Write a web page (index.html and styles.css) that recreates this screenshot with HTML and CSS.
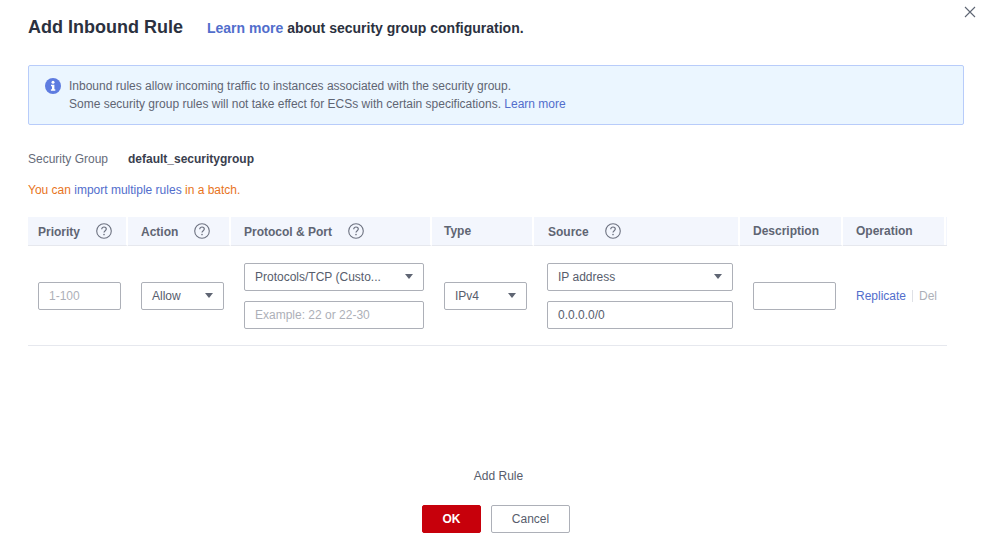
FILE: index.html
```html
<!DOCTYPE html>
<html lang="en">
<head>
<meta charset="utf-8">
<title>Add Inbound Rule</title>
<link rel="stylesheet" href="styles.css">
</head>
<body>
<div class="dialog">
  <button class="close" aria-label="Close">
    <svg width="12" height="12" viewBox="0 0 12 12"><path d="M1 1L11 11M11 1L1 11" stroke="#5e6573" stroke-width="1.1" fill="none"/></svg>
  </button>
  <header class="head">
    <h1 class="title">Add Inbound Rule</h1>
    <p class="subtitle"><a class="link">Learn more</a> about security group configuration.</p>
  </header>
  <div class="notice">
    <svg class="info" width="16" height="16" viewBox="0 0 16 16"><circle cx="8" cy="8" r="8" fill="#5e7ce0"/><circle cx="8" cy="4.3" r="1.5" fill="#fff"/><path d="M6 6.7H9.4V11.3H10.3V12.8H5.9V11.3H7V8.2H6Z" fill="#fff"/></svg>
    <p class="notice-text">Inbound rules allow incoming traffic to instances associated with the security group.<br>Some security group rules will not take effect for ECSs with certain specifications. <a class="link">Learn more</a></p>
  </div>
  <div class="group"><span class="group-label">Security Group</span><span class="group-name">default_securitygroup</span></div>
  <p class="batch">You can <a class="link">import multiple rules</a> in a batch.</p>
  <div class="table">
    <div class="th has-help">Priority<svg class="help" viewBox="0 0 16 16"><use href="#q"/></svg></div>
    <div class="th has-help">Action<svg class="help" viewBox="0 0 16 16"><use href="#q"/></svg></div>
    <div class="th has-help">Protocol &amp; Port<svg class="help" viewBox="0 0 16 16"><use href="#q"/></svg></div>
    <div class="th">Type</div>
    <div class="th has-help">Source<svg class="help" viewBox="0 0 16 16"><use href="#q"/></svg></div>
    <div class="th">Description</div>
    <div class="th last">Operation</div>

    <div class="td"><div class="field w83 placeholder">1-100</div></div>
    <div class="td"><div class="field w83 select">Allow<i class="caret"></i></div></div>
    <div class="td stack">
      <div class="field w180 select"><span>Protocols/TCP (Custo...</span><i class="caret"></i></div>
      <div class="field w180 placeholder">Example: 22 or 22-30</div>
    </div>
    <div class="td"><div class="field w83 select">IPv4<i class="caret"></i></div></div>
    <div class="td stack">
      <div class="field w186 select">IP address<i class="caret"></i></div>
      <div class="field w186">0.0.0.0/0</div>
    </div>
    <div class="td"><div class="field w83"></div></div>
    <div class="td"><div class="ops"><a class="link">Replicate</a><span class="sep"></span><span class="disabled">Delete</span></div></div>
  </div>
  <div class="add">Add Rule</div>
  <div class="actions">
    <button class="btn ok">OK</button>
    <button class="btn cancel">Cancel</button>
  </div>
</div>
<svg class="defs" width="0" height="0"><defs><g id="q"><circle cx="8" cy="8" r="7.3" fill="none" stroke="#6d7280" stroke-width="1.1"/><path d="M5.7 6.2C5.7 4.8 6.8 4 8 4C9.3 4 10.3 4.9 10.3 6.1C10.3 7.7 8 7.8 8 9.6" fill="none" stroke="#6d7280" stroke-width="1.2"/><circle cx="8" cy="11.6" r=".8" fill="#6d7280"/></g></defs></svg>
</body>
</html>
```

FILE: styles.css
```css
* { box-sizing: border-box; }
html, body { margin: 0; padding: 0; background: #fff; }
body { width: 987px; height: 547px; overflow: hidden; font-family: "Liberation Sans", Arial, sans-serif; font-size: 12px; color: #575d6c; }
p, h1 { margin: 0; }
.defs { position: absolute; }
.dialog { position: relative; width: 987px; height: 547px; padding: 16px 0 0 28px; }
.close { position: absolute; top: 6px; left: 964px; width: 12px; height: 12px; padding: 0; border: 0; background: none; display: flex; }
.head { display: flex; align-items: center; height: 22px; margin-bottom: 27px; }
.title { font-size: 18px; font-weight: 700; color: #2b3140; line-height: 22px; width: 179px; }
.subtitle { font-size: 14px; font-weight: 700; color: #2b3140; line-height: 22px; padding-top: 2px; }
.link { color: #526ecc; }
.notice { width: 936px; height: 60px; background: #ebf6ff; border: 1px solid #b8ccfa; border-radius: 2px; display: flex; padding: 12px 0 0 16px; margin-bottom: 26px; }
.info { flex: none; margin-right: 8px; }
.notice-text { line-height: 18px; margin-top: -1px; color: #5f6573; }
.group { display: flex; height: 16px; line-height: 16px; margin-bottom: 15px; }
.group-label { width: 100px; color: #666c7a; }
.group-name { font-weight: 700; color: #3a404e; }
.batch { line-height: 16px; color: #e8741c; margin-bottom: 19px; }
.table { display: grid; width: 919px; grid-template-columns: 100px 103px 201px 102px 206px 103px 104px; grid-template-rows: 29px 100px; }
.th { background: #f3f6fd; border-right: 2px solid #fff; border-bottom: 1px solid #e6e8ee; padding: 0 0 1px 13px; display: flex; align-items: center; font-weight: 700; color: #5f6573; }
.has-help { padding: 1px 0 0 13px; }
.th:first-child { padding-left: 10px; }
.th:nth-child(4) { padding-left: 12px; }
.th:nth-child(5) { padding-left: 14px; }
.th.last { border-right: 0; background: linear-gradient(to right, #f3f6fd 101px, #fff 101px, #fff 103px, #f3f6fd 103px); }
.help { width: 16px; height: 16px; margin-left: 16px; margin-top: -1px; }
.td { padding-left: 13px; border-bottom: 1px solid #e6e8ee; display: flex; flex-direction: column; justify-content: center; align-items: flex-start; color: #575d6c; }
.td:nth-child(8) { padding-left: 10px; }
.td:nth-child(11) { padding-left: 12px; }
.stack { gap: 10px; }
.field { height: 28px; border: 1px solid #adb0b8; border-radius: 2px; background: #fff; padding: 0 10px; display: flex; align-items: center; justify-content: space-between; line-height: 26px; white-space: nowrap; }
.w83 { width: 83px; }
.w180 { width: 180px; }
.w186 { width: 186px; }
.placeholder { color: #adb0b8; }
.caret { width: 0; height: 0; border-left: 4px solid transparent; border-right: 4px solid transparent; border-top: 5px solid #5f6573; flex: none; }
.ops { width: 81px; display: flex; align-items: center; overflow: hidden; white-space: nowrap; }
.sep { flex: none; width: 1px; height: 12px; background: #dfe1e6; margin: 0 6px; }
.disabled { color: #adb0b8; }
.add { width: 941px; margin-top: 122px; height: 16px; line-height: 16px; text-align: center; color: #575d6c; }
.actions { width: 936px; display: flex; justify-content: center; gap: 10px; margin-top: 21px; }
.btn { height: 28px; border-radius: 2px; font: 12px "Liberation Sans", Arial, sans-serif; padding: 0; }
.ok { width: 59px; background: #c7000b; border: 1px solid #c7000b; color: #fff; font-weight: 700; }
.cancel { width: 79px; background: #fff; border: 1px solid #adb0b8; color: #575d6c; }
```
